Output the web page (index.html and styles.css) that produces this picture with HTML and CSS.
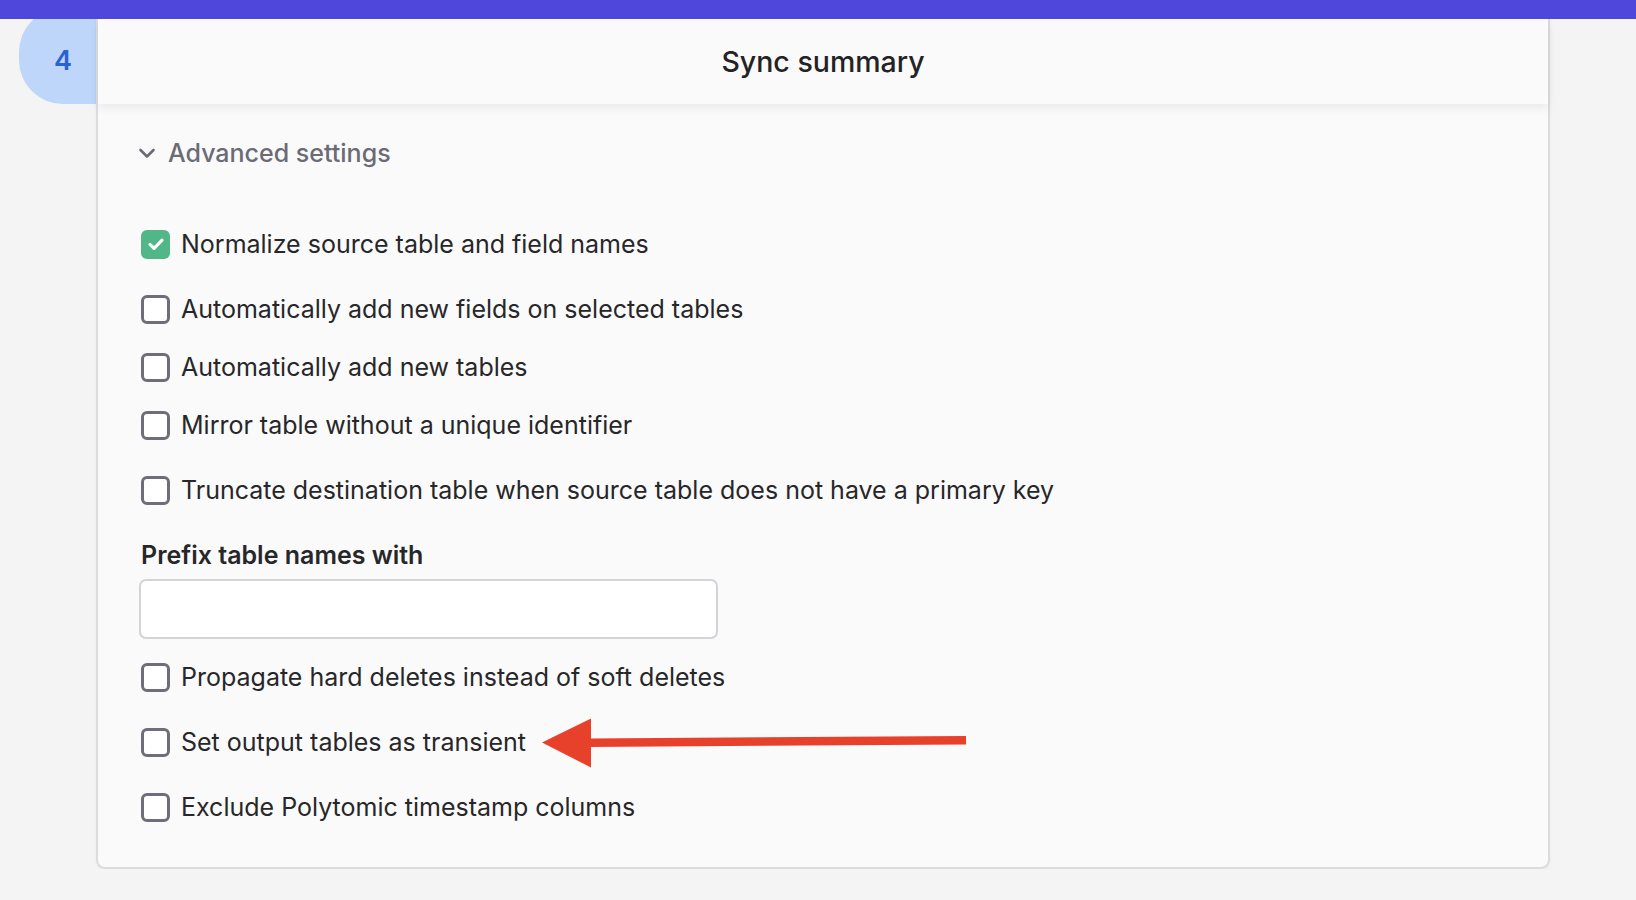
FILE: index.html
```html
<!DOCTYPE html>
<html lang="en">
<head>
    <meta charset="UTF-8">
    <meta name="viewport" content="width=device-width, initial-scale=1.0">
    <title>Sync summary</title>
    <link rel="stylesheet" href="styles.css">
</head>
<body>
    <div class="topbar"></div>

    <div class="step">
        <div class="step-badge">4</div>

        <div class="card">
            <div class="card-header">Sync summary</div>

            <div class="card-body">
                <div class="advanced">
                    <svg class="chevron" width="18" height="18" viewBox="0 0 18 18">
                        <path d="M2.5 6 L9 12.5 L15.5 6" fill="none" stroke="#6b6b76" stroke-width="2.6" stroke-linecap="round" stroke-linejoin="round"/>
                    </svg>
                    Advanced settings
                </div>

                <label class="option first">
                    <span class="box checked">
                        <svg width="24" height="24" viewBox="0 0 20 20">
                            <path d="M5 10.3 L8.4 13.6 L15 6.8" fill="none" stroke="#fff" stroke-width="2.6" stroke-linecap="round" stroke-linejoin="round"/>
                        </svg>
                    </span>
                    Normalize source table and field names
                </label>
                <label class="option">
                    <span class="box"></span>
                    Automatically add new fields on selected tables
                </label>
                <label class="option tight">
                    <span class="box"></span>
                    Automatically add new tables
                </label>
                <label class="option tight">
                    <span class="box"></span>
                    Mirror table without a unique identifier
                </label>
                <label class="option">
                    <span class="box"></span>
                    Truncate destination table when source table does not have a primary key
                </label>

                <div class="field-label">Prefix table names with</div>
                <input class="text-input" type="text">

                <label class="option after-input">
                    <span class="box"></span>
                    Propagate hard deletes instead of soft deletes
                </label>
                <label class="option">
                    <span class="box"></span>
                    Set output tables as transient
                </label>
                <label class="option">
                    <span class="box"></span>
                    Exclude Polytomic timestamp columns
                </label>

                <!-- annotation arrow drawn over the form -->
                <svg class="pointer" width="426" height="52" viewBox="0 0 426 52">
                    <polygon points="46,20.5 424,18 424,26.5 46,29" fill="#e8412b"/>
                    <polygon points="0,24.5 49,0.5 49,49.5" fill="#e8412b"/>
                </svg>
            </div>
        </div>
    </div>
</body>
</html>
```

FILE: styles.css
```css
body {
    margin: 0;
    background: #f4f4f4;
    font-family: Inter, "Noto Sans", sans-serif;
    color: #27272a;
}

.topbar {
    position: relative;
    z-index: 3;
    height: 19px;
    background: #4f46dc;
}

.step {
    display: flex;
    align-items: flex-start;
    padding: 0 86px 0 19px;
}

.step-badge {
    flex-shrink: 0;
    width: 90px;
    height: 96px;
    margin-top: -11px;
    margin-right: -13px;
    padding-top: 8px;
    box-sizing: border-box;
    display: flex;
    align-items: center;
    padding-left: 35px;
    background: #bdd6fa;
    color: #2a62d4;
    font-size: 27px;
    font-weight: 600;
    border-radius: 44px 0 0 44px;
}

.card {
    position: relative;
    z-index: 1;
    flex: 1;
    background: #fafafa;
    border: 2px solid #dbdbe0;
    border-top: none;
    border-radius: 0 0 9px 9px;
    box-shadow: 0 1px 3px rgba(0, 0, 0, 0.05);
}

.card-header {
    height: 85px;
    display: flex;
    align-items: center;
    justify-content: center;
    font-size: 28.5px;
    font-weight: 500;
    color: #232326;
    box-shadow: 0 4px 9px rgba(0, 0, 0, 0.07);
}

.card-body {
    position: relative;
    padding: 34px 0 45px 43px;
}

.advanced {
    display: flex;
    align-items: center;
    height: 30px;
    font-size: 25px;
    font-weight: 500;
    color: #6b6b76;
}

.chevron {
    margin-left: -3px;
    margin-right: 12px;
}

.option {
    display: flex;
    align-items: center;
    height: 30px;
    margin-top: 35px;
    font-size: 25px;
    cursor: pointer;
}

.option.first {
    margin-top: 61px;
}

.option.tight {
    margin-top: 28px;
}

.option.after-input {
    margin-top: 23px;
}

.box {
    flex-shrink: 0;
    width: 29px;
    height: 29px;
    box-sizing: border-box;
    margin-right: 11px;
    border: 3px solid #6e6e78;
    border-radius: 6px;
    background: #fff;
    display: flex;
    align-items: center;
    justify-content: center;
}

.box.checked {
    border: none;
    background: #52b788;
}

.field-label {
    margin-top: 35px;
    height: 30px;
    line-height: 30px;
    font-size: 25px;
    font-weight: 600;
}

.text-input {
    display: block;
    width: 579px;
    height: 60px;
    box-sizing: border-box;
    margin: 9px 0 0 -2px;
    border: 2px solid #d4d4d8;
    border-radius: 7px;
    background: #fff;
}

.pointer {
    position: absolute;
    left: 444px;
    top: 614px;
}
```
